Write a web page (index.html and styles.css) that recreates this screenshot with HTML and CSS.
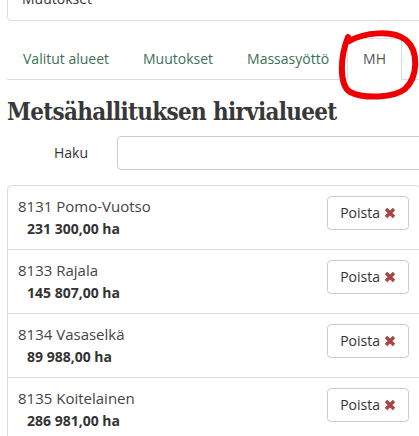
FILE: index.html
```html
<!DOCTYPE html>
<html lang="fi">
<head>
    <meta charset="UTF-8">
    <title>Metsähallituksen hirvialueet</title>
    <link rel="stylesheet" href="styles.css">
</head>
<body>
    <div class="page">
        <div class="summary-box">Muutokset</div>

        <ul class="nav-tabs">
            <li><a href="#">Valitut alueet</a></li>
            <li><a href="#">Muutokset</a></li>
            <li><a href="#">Massasyöttö</a></li>
            <li class="active"><a href="#">MH</a></li>
        </ul>

        <h2 class="page-title">Metsähallituksen hirvialueet</h2>

        <div class="form-row">
            <label for="haku">Haku</label>
            <input type="text" id="haku">
        </div>

        <div class="list-group">
            <div class="list-item">
                <div class="area">
                    <div class="area-name">8131 Pomo-Vuotso</div>
                    <div class="area-size">231 300,00 ha</div>
                </div>
                <button class="btn-remove">Poista <svg class="x-icon" viewBox="0 0 12 12"><path d="M2 2 L10 10 M10 2 L2 10"/></svg></button>
            </div>
            <div class="list-item">
                <div class="area">
                    <div class="area-name">8133 Rajala</div>
                    <div class="area-size">145 807,00 ha</div>
                </div>
                <button class="btn-remove">Poista <svg class="x-icon" viewBox="0 0 12 12"><path d="M2 2 L10 10 M10 2 L2 10"/></svg></button>
            </div>
            <div class="list-item">
                <div class="area">
                    <div class="area-name">8134 Vasaselkä</div>
                    <div class="area-size">89 988,00 ha</div>
                </div>
                <button class="btn-remove">Poista <svg class="x-icon" viewBox="0 0 12 12"><path d="M2 2 L10 10 M10 2 L2 10"/></svg></button>
            </div>
            <div class="list-item">
                <div class="area">
                    <div class="area-name">8135 Koitelainen</div>
                    <div class="area-size">286 981,00 ha</div>
                </div>
                <button class="btn-remove">Poista <svg class="x-icon" viewBox="0 0 12 12"><path d="M2 2 L10 10 M10 2 L2 10"/></svg></button>
            </div>
        </div>
    </div>

    <!-- Hand-drawn marker round the MH tab -->
    <svg class="marker" width="419" height="436" viewBox="0 0 419 436">
        <path d="M349 41 C364 33 392 29 406 40 C419 51 418 77 405 89 C394 98 364 99 350 92 C339 85 340 57 348 37"/>
    </svg>
</body>
</html>
```

FILE: styles.css
```css
html, body {
    margin: 0;
    padding: 0;
    background: #fff;
}
body {
    width: 419px;
    height: 436px;
    overflow: hidden;
    position: relative;
    font-family: "Open Sans", "DejaVu Sans", sans-serif;
    font-size: 14px;
    line-height: 20px;
    color: #333;
}
.page {
    width: 413px;
    margin-left: 7px;
}
/* Box cut off at the top of the shot */
.summary-box {
    margin-top: -20px;
    padding: 8px 15px 11px 14px;
    border: 1px solid #ddd;
    border-radius: 4px;
    width: 440px;
}
/* Tabs */
.nav-tabs {
    list-style: none;
    margin: 17px 0 0 0;
    padding: 0;
    display: flex;
    border-bottom: 1px solid #ddd;
    width: 420px;
}
.nav-tabs li {
    margin-bottom: -1px;
}
.nav-tabs a {
    display: block;
    margin-right: 2px;
    padding: 10px 15px;
    border: 1px solid transparent;
    border-radius: 4px 4px 0 0;
    color: #3b7155;
    text-decoration: none;
}
.nav-tabs .active a {
    color: #555;
    background: #fff;
    border-color: #ddd #ddd transparent #ddd;
}
.page-title {
    margin: 18px 0 10px 0;
    font-family: "DejaVu Serif Condensed", "DejaVu Serif", serif;
    font-stretch: condensed;
    font-weight: bold;
    font-size: 24px;
    line-height: 28px;
    letter-spacing: -0.7px;
    color: #383838;
}
/* Search row */
.form-row {
    display: flex;
    align-items: center;
    width: 440px;
    margin-bottom: 15px;
}
.form-row label {
    flex-shrink: 0;
    width: 81px;
    padding-right: 15px;
    text-align: right;
}
.form-row input {
    flex: 1;
    min-width: 0;
    margin-left: 14px;
    height: 34px;
    box-sizing: border-box;
    padding: 6px 12px;
    border: 1px solid #ccc;
    border-radius: 4px;
    font: inherit;
}
/* Area list */
.list-group {
    border: 1px solid #ddd;
    border-radius: 4px;
}
.list-item {
    display: flex;
    justify-content: space-between;
    align-items: flex-start;
    padding: 10px;
    border-top: 1px solid #ddd;
}
.list-item:first-child {
    border-top: none;
}
.area-name {
    font-size: 15px;
    color: #444;
}
.area-size {
    margin-top: 3px;
    padding-left: 9px;
    font-weight: bold;
}
.btn-remove {
    display: flex;
    align-items: center;
    gap: 4px;
    height: 34px;
    padding: 6px 12px;
    background: #fff;
    border: 1px solid #ccc;
    border-radius: 4px;
    font: inherit;
    color: #333;
}
.x-icon {
    width: 12px;
    height: 12px;
    stroke: #a94442;
    stroke-width: 3.4;
    fill: none;
}
.marker {
    position: absolute;
    top: 0;
    left: 0;
    pointer-events: none;
}
.marker path {
    fill: none;
    stroke: #ee0000;
    stroke-width: 6;
    stroke-linecap: round;
    stroke-linejoin: round;
}
```
